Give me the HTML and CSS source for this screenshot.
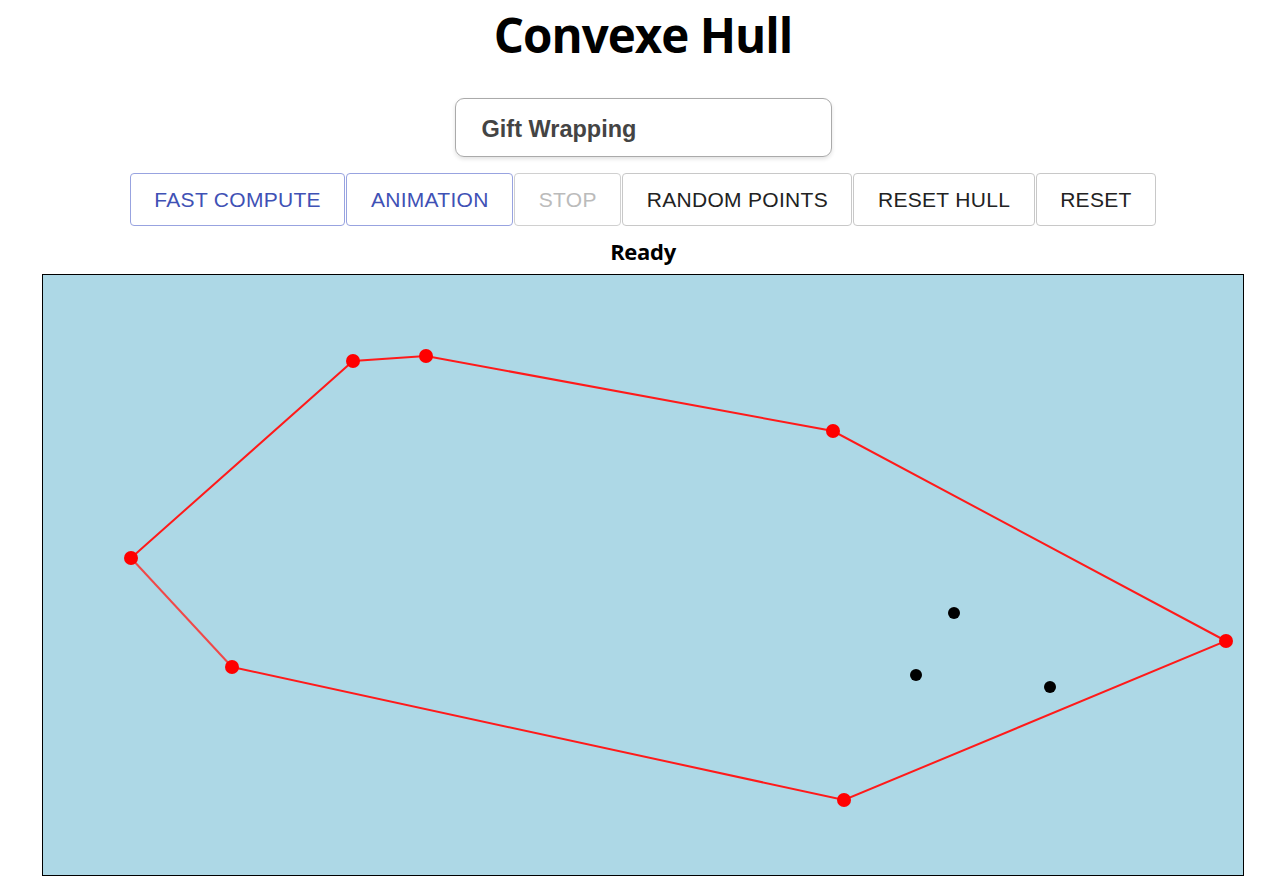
FILE: index.html
```html
<!DOCTYPE html>
<html lang="en">
<head>
<meta charset="utf-8">
<title>Convexe Hull</title>
<link rel="stylesheet" href="styles.css">
</head>
<body>
<div class="page">
  <h1 class="title">Convexe Hull</h1>
  <div class="select">Gift Wrapping</div>
  <div class="toolbar">
    <button class="btn btn-primary">FAST COMPUTE</button>
    <button class="btn btn-primary">ANIMATION</button>
    <button class="btn btn-disabled" disabled>STOP</button>
    <button class="btn">RANDOM POINTS</button>
    <button class="btn">RESET HULL</button>
    <button class="btn">RESET</button>
  </div>
  <div class="status">Ready</div>
  <div class="canvas">
    <svg class="plot" width="1200" height="600" viewBox="0 0 1200 600">
      <polyline points="88,283 310,86 383,81 790,156 1183,366 801,525 189,392" fill="none" stroke="#ff1a1a" stroke-width="2"/>
      <line x1="189" y1="392" x2="88" y2="283" stroke="#f04848" stroke-width="2"/>
      <g fill="#ff0000">
        <circle cx="88" cy="283" r="7"/>
        <circle cx="310" cy="86" r="7"/>
        <circle cx="383" cy="81" r="7"/>
        <circle cx="790" cy="156" r="7"/>
        <circle cx="1183" cy="366" r="7"/>
        <circle cx="801" cy="525" r="7"/>
        <circle cx="189" cy="392" r="7"/>
      </g>
      <g fill="#000">
        <circle cx="911" cy="338" r="6"/>
        <circle cx="873" cy="400" r="6"/>
        <circle cx="1007" cy="412" r="6"/>
      </g>
    </svg>
  </div>
</div>
</body>
</html>
```
FILE: styles.css
```css
html, body {
  margin: 0;
  padding: 0;
  background: #fff;
}
.page {
  padding: 7px 0 0 9px;
  display: flex;
  flex-direction: column;
  align-items: center;
}
.title {
  margin: 0;
  font-family: "Open Sans", "Noto Sans", sans-serif;
  font-weight: 700;
  font-size: 47.5px;
  letter-spacing: -1px;
  line-height: 56px;
  color: #000;
}
.select {
  box-sizing: border-box;
  margin-top: 35px;
  width: 377px;
  height: 59px;
  border: 1px solid #aaa;
  border-radius: 9px;
  box-shadow: 0 2px 4px rgba(0, 0, 0, 0.12);
  padding: 3px 0 0 26px;
  display: flex;
  align-items: center;
  font-family: "Liberation Sans", Arial, sans-serif;
  font-weight: 700;
  font-size: 23.5px;
  color: #444;
}
.toolbar {
  margin-top: 16px;
  display: flex;
  gap: 1px;
}
.btn {
  box-sizing: border-box;
  height: 53px;
  padding: 0 23.5px;
  background: #fff;
  border: 1px solid #c8c8c8;
  border-radius: 4px;
  font-family: "Liberation Sans", Arial, sans-serif;
  font-size: 21px;
  color: #222;
  letter-spacing: 0.3px;
  cursor: pointer;
}
.btn-primary {
  border-color: #98a3e0;
  color: #3f51b5;
}
.btn-disabled {
  color: #bbb;
  border-color: #d0d0d0;
  cursor: default;
}
.status {
  margin-top: 10px;
  font-family: "Open Sans", "Noto Sans", sans-serif;
  font-weight: 700;
  font-size: 22px;
  letter-spacing: -0.3px;
  line-height: 30px;
  color: #000;
}
.canvas {
  margin-top: 8px;
  width: 1200px;
  height: 600px;
  border: 1px solid #000;
  background: #add8e6;
}
.plot {
  display: block;
}
```
